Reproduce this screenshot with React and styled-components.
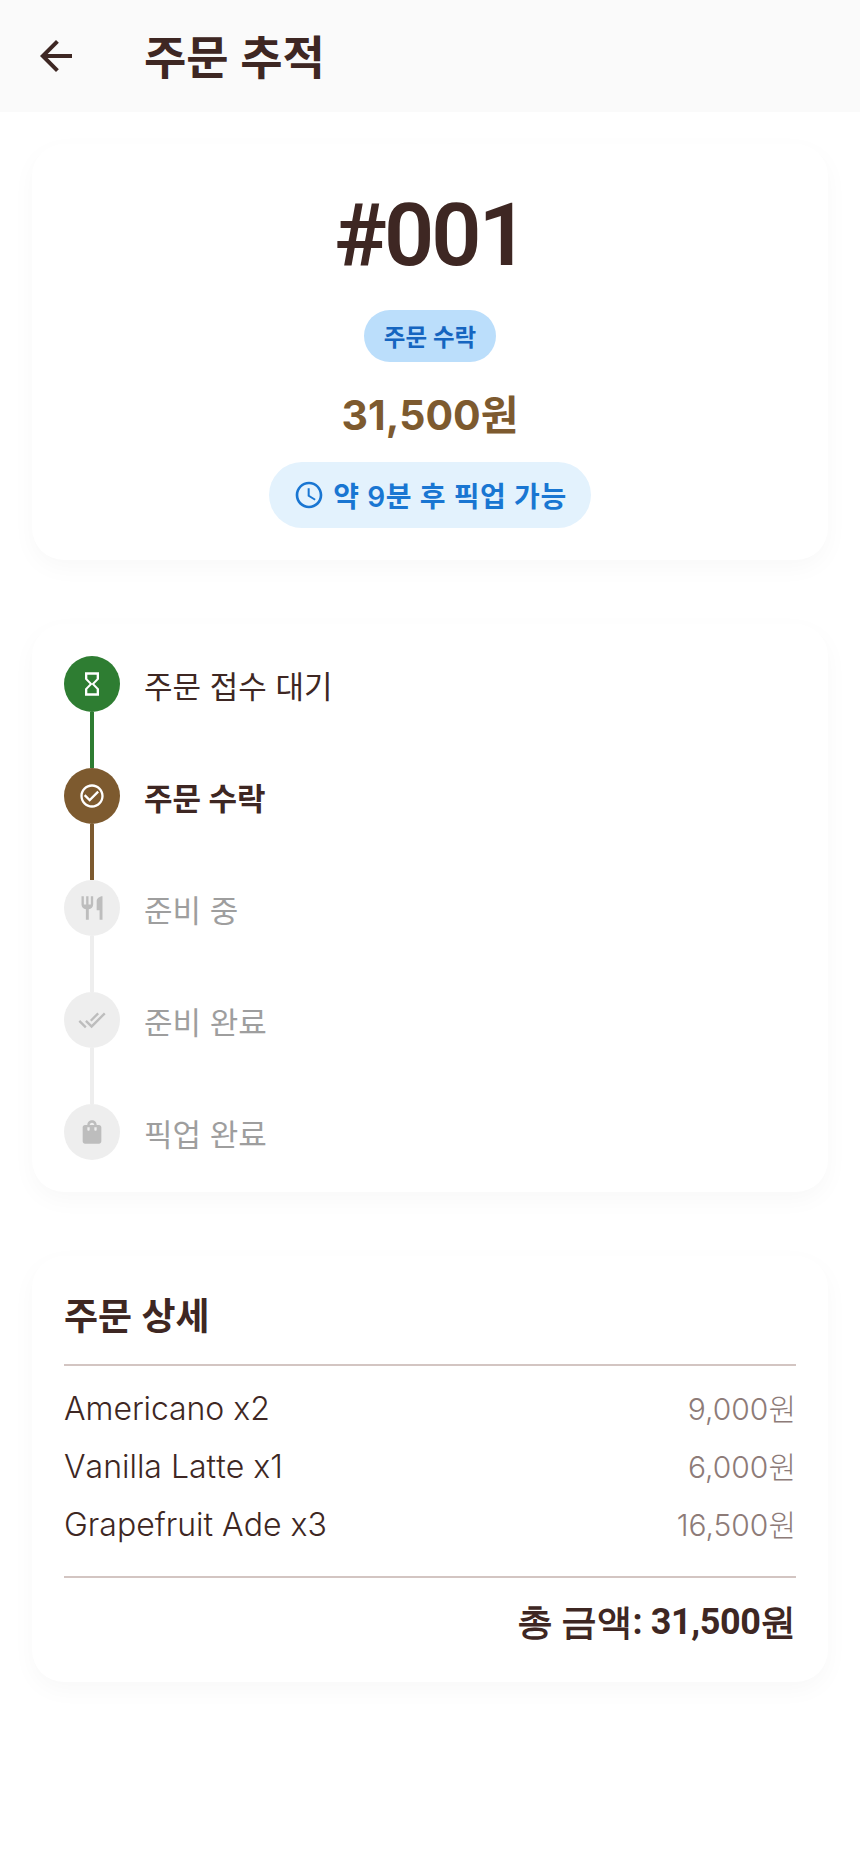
import React from 'react';
import styled, { createGlobalStyle } from 'styled-components';
import { MdArrowBack, MdAccessTime, MdHourglassEmpty, MdCheckCircleOutline, MdRestaurant, MdDoneAll, MdShoppingBag } from 'react-icons/md';

const Global = createGlobalStyle`
  html, body { margin: 0; padding: 0; background: #fff; }
  body { font-family: Inter, "Noto Sans CJK KR", sans-serif; color: #3e2723; }
`;
const Page = styled.div`width: 860px; min-height: 1860px; background: #fff; display: flex; flex-direction: column;`;
const Header = styled.header`height: 112px; background: #fafafa; display: flex; align-items: center; padding: 0 32px; box-sizing: border-box; gap: 64px;`;
const BackButton = styled.div`width: 48px; height: 48px; display: flex; align-items: center; justify-content: center; color: #3e2723; font-size: 48px;`;
const Title = styled.h1`margin: 0; padding-top: 2px; font-size: 46px; font-weight: 600; line-height: 1; color: #3e2723;`;
const Main = styled.main`display: flex; flex-direction: column; gap: 64px; padding: 32px;`;
const Card = styled.section`background: #fff; border-radius: 32px; box-shadow: 0 8px 24px rgba(0,0,0,0.03); padding: 32px;`;
const SummaryCard = styled(Card)`display: flex; flex-direction: column; align-items: center; padding-top: 38px;`;
const OrderNo = styled.div`font-size: 88px; font-weight: 600; line-height: 106px; letter-spacing: -3px; color: #3e2723; font-family: Roboto, Inter, sans-serif;`;
const StatusChip = styled.div`margin-top: 22px; height: 52px; width: 132px; border-radius: 26px; background: #bbdefb; color: #1565c0; font-size: 23.5px; font-weight: 600; display: flex; align-items: center; justify-content: center;`;
const Price = styled.div`margin-top: 26px; font-size: 41px; font-weight: 700; line-height: 54px; color: #7d5a2f;`;
const EtaChip = styled.div`margin-top: 20px; height: 66px; padding: 0 24px; border-radius: 33px; background: #e3f2fd; color: #1976d2; font-size: 28px; font-weight: 600; letter-spacing: 0.6px; display: flex; align-items: center; gap: 8px;`;
const StepList = styled(Card)`display: flex; flex-direction: column;`;
const Step = styled.div`display: flex; gap: 24px;`;
const Rail = styled.div`display: flex; flex-direction: column; align-items: center; width: 56px;`;
const Dot = styled.div`width: 56px; height: 56px; border-radius: 50%; background: ${p => p.$bg}; color: ${p => p.$fg}; display: flex; align-items: center; justify-content: center; font-size: 28px;`;
const Line = styled.div`width: 4px; height: 56px; background: ${p => p.$bg};`;
const StepLabel = styled.div`height: 56px; display: flex; align-items: center; font-size: 31px; padding-top: 1px; box-sizing: border-box; color: ${p => p.$color}; font-weight: ${p => p.$bold ? 700 : 400};`;
const DetailTitle = styled.h2`margin: 0 0 18px; font-size: 37px; font-weight: 600; line-height: 58px; color: #3e2723;`;
const Divider = styled.div`height: 2px; background: #d3c5c2;`;
const Items = styled.div`display: flex; flex-direction: column; padding: 23px 0 31px; gap: 18px;`;
const Row = styled.div`display: flex; justify-content: space-between; align-items: center; font-size: 32px; font-weight: 300; line-height: 40px; font-kerning: none; color: #3e2723;`;
const Amount = styled.span`color: #8d7b78; font-size: 30px; font-weight: 300; font-kerning: normal;`;
const Total = styled.div`text-align: right; font-size: 36px; font-weight: 700; line-height: 56px; padding-top: 16px; letter-spacing: -0.4px; font-family: Roboto, Inter, sans-serif;`;

const steps = [
  { t: '주문 접수 대기', I: MdHourglassEmpty, bg: '#2e7d32', fg: '#fff', line: '#2e7d32', c: '#3e2723' },
  { t: '주문 수락', I: MdCheckCircleOutline, bg: '#7d5a2f', fg: '#fff', line: '#7d5a2f', c: '#3e2723', bold: true },
  { t: '준비 중', I: MdRestaurant, bg: '#eeeeee', fg: '#bdbdbd', line: '#eeeeee', c: '#9e9e9e' },
  { t: '준비 완료', I: MdDoneAll, bg: '#eeeeee', fg: '#bdbdbd', line: '#eeeeee', c: '#9e9e9e' },
  { t: '픽업 완료', I: MdShoppingBag, bg: '#eeeeee', fg: '#bdbdbd', c: '#9e9e9e' },
];
const items = [['Americano x2', '9,000원'], ['Vanilla Latte x1', '6,000원'], ['Grapefruit Ade x3', '16,500원']];

export default function App() {
  return (
    <Page>
      <Global />
      <Header>
        <BackButton><MdArrowBack /></BackButton>
        <Title>주문 추적</Title>
      </Header>
      <Main>
        <SummaryCard>
          <OrderNo>#001</OrderNo>
          <StatusChip>주문 수락</StatusChip>
          <Price>31,500원</Price>
          <EtaChip><MdAccessTime size={32} />약 9분 후 픽업 가능</EtaChip>
        </SummaryCard>
        <StepList>
          {steps.map(s => (
            <Step key={s.t}>
              <Rail>
                <Dot $bg={s.bg} $fg={s.fg}><s.I /></Dot>
                {s.line && <Line $bg={s.line} />}
              </Rail>
              <StepLabel $color={s.c} $bold={s.bold}>{s.t}</StepLabel>
            </Step>
          ))}
        </StepList>
        <Card>
          <DetailTitle>주문 상세</DetailTitle>
          <Divider />
          <Items>
            {items.map(([n, a]) => <Row key={n}><span>{n}</span><Amount>{a}</Amount></Row>)}
          </Items>
          <Divider />
          <Total>총 금액: 31,500원</Total>
        </Card>
      </Main>
    </Page>
  );
}
